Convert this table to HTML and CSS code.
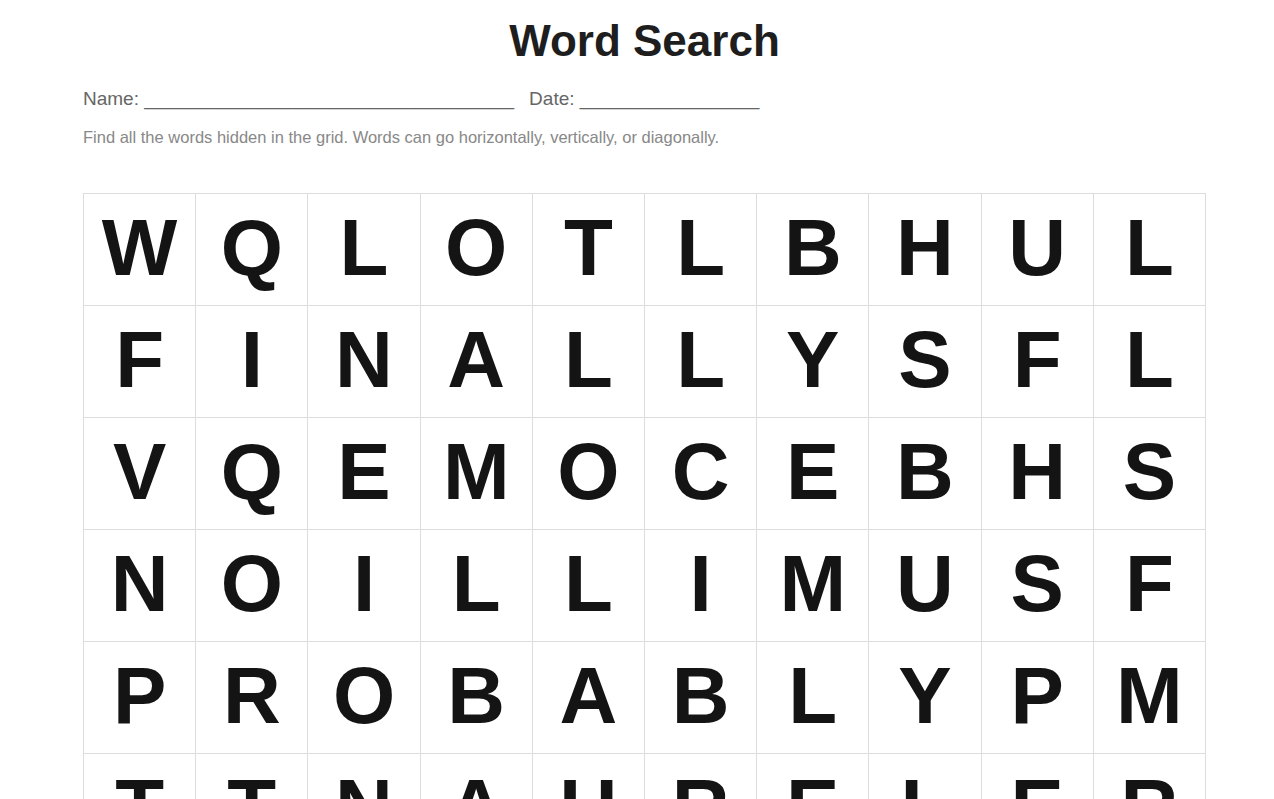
FILE: index.html
```html
<!DOCTYPE html>
<html lang="en">
<head>
<meta charset="utf-8">
<title>Word Search</title>
<link rel="stylesheet" href="styles.css">
</head>
<body>
<main class="sheet">
  <h1 class="title">Word Search</h1>
  <div class="fields">
    <span class="field">Name: ___________________________________</span>
    <span class="field">Date: _________________</span>
  </div>
  <p class="instructions">Find all the words hidden in the grid. Words can go horizontally, vertically, or diagonally.</p>
  <div class="grid">
    <div class="cell">W</div><div class="cell">Q</div><div class="cell">L</div><div class="cell">O</div><div class="cell">T</div><div class="cell">L</div><div class="cell">B</div><div class="cell">H</div><div class="cell">U</div><div class="cell">L</div>
    <div class="cell">F</div><div class="cell">I</div><div class="cell">N</div><div class="cell">A</div><div class="cell">L</div><div class="cell">L</div><div class="cell">Y</div><div class="cell">S</div><div class="cell">F</div><div class="cell">L</div>
    <div class="cell">V</div><div class="cell">Q</div><div class="cell">E</div><div class="cell">M</div><div class="cell">O</div><div class="cell">C</div><div class="cell">E</div><div class="cell">B</div><div class="cell">H</div><div class="cell">S</div>
    <div class="cell">N</div><div class="cell">O</div><div class="cell">I</div><div class="cell">L</div><div class="cell">L</div><div class="cell">I</div><div class="cell">M</div><div class="cell">U</div><div class="cell">S</div><div class="cell">F</div>
    <div class="cell">P</div><div class="cell">R</div><div class="cell">O</div><div class="cell">B</div><div class="cell">A</div><div class="cell">B</div><div class="cell">L</div><div class="cell">Y</div><div class="cell">P</div><div class="cell">M</div>
    <div class="cell">T</div><div class="cell">T</div><div class="cell">N</div><div class="cell">A</div><div class="cell">U</div><div class="cell">R</div><div class="cell">E</div><div class="cell">L</div><div class="cell">E</div><div class="cell">R</div>
  </div>
</main>
</body>
</html>
```

FILE: styles.css
```css
html, body {
  margin: 0;
  padding: 0;
  background: #ffffff;
}

body {
  font-family: "Liberation Sans", Arial, sans-serif;
  color: #222222;
}

.sheet {
  width: 1123px;
  margin-left: 83px;
  padding-top: 15px;
}

.title {
  margin: 0;
  text-align: center;
  font-size: 44px;
  line-height: 52px;
  font-weight: bold;
  color: #1e1e1e;
}

.fields {
  display: flex;
  gap: 15px;
  margin-top: 21px;
  font-size: 19px;
  line-height: 22px;
  color: #666666;
}

.field {
  white-space: nowrap;
}

.instructions {
  margin: 18px 0 0;
  font-size: 16.5px;
  line-height: 19px;
  color: #888888;
}

.grid {
  margin-top: 46px;
  display: grid;
  grid-template-columns: repeat(10, 1fr);
  border-top: 1px solid #dddddd;
  border-left: 1px solid #dddddd;
}

.cell {
  box-sizing: border-box;
  height: 112px;
  padding-bottom: 4px;
  display: flex;
  align-items: center;
  justify-content: center;
  border-right: 1px solid #dddddd;
  border-bottom: 1px solid #dddddd;
  font-size: 80px;
  font-weight: bold;
  color: #141414;
}
```
